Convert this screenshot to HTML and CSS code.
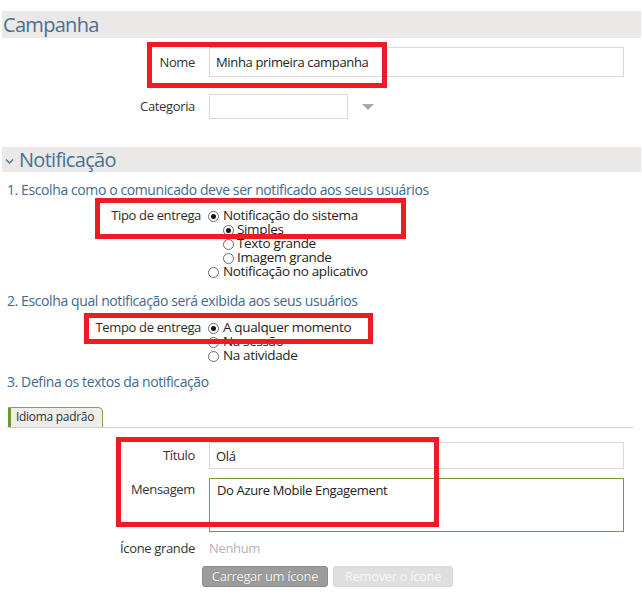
FILE: index.html
```html
<!DOCTYPE html>
<html lang="pt">
<head>
<meta charset="utf-8">
<title>Campanha</title>
<link rel="stylesheet" href="styles.css">
</head>
<body>
<div class="page">
  <div class="bar bar-campanha"><h2 class="bar-title">Campanha</h2></div>

  <div class="field field-nome">
    <label class="flabel" for="nome">Nome</label>
    <input class="text-input nome-input" id="nome" type="text" value="Minha primeira campanha">
  </div>

  <div class="field field-categoria">
    <label class="flabel">Categoria</label>
    <div class="select-box"></div>
    <span class="caret"></span>
  </div>

  <div class="bar bar-notif">
    <svg class="chevron" width="9" height="7" viewBox="0 0 9 7"><polyline points="1,1.5 4.5,5 8,1.5" fill="none" stroke="#4a7092" stroke-width="1.4"/></svg>
    <h2 class="bar-title">Notificação</h2>
  </div>

  <p class="step step1">1. Escolha como o comunicado deve ser notificado aos seus usuários</p>

  <div class="rfield rfield-tipo">
    <span class="rlabel">Tipo de entrega</span>
    <div class="options">
      <div class="opt"><span class="radio checked"></span><span>Notificação do sistema</span></div>
      <div class="opt sub"><span class="radio checked"></span><span>Simples</span></div>
      <div class="opt sub"><span class="radio"></span><span>Texto grande</span></div>
      <div class="opt sub"><span class="radio"></span><span>Imagem grande</span></div>
      <div class="opt"><span class="radio"></span><span>Notificação no aplicativo</span></div>
    </div>
  </div>

  <p class="step step2">2. Escolha qual notificação será exibida aos seus usuários</p>

  <div class="rfield rfield-tempo">
    <span class="rlabel">Tempo de entrega</span>
    <div class="options">
      <div class="opt"><span class="radio checked"></span><span>A qualquer momento</span></div>
      <div class="opt"><span class="radio"></span><span>Na sessão</span></div>
      <div class="opt"><span class="radio"></span><span>Na atividade</span></div>
    </div>
  </div>

  <p class="step step3">3. Defina os textos da notificação</p>

  <div class="tabs">
    <div class="tab">Idioma padrão</div>
  </div>

  <div class="field field-titulo">
    <label class="flabel">Título</label>
    <input class="text-input titulo-input" type="text" value="Olá">
  </div>

  <div class="field field-msg">
    <label class="flabel msg-label">Mensagem</label>
    <textarea class="msg-input">Do Azure Mobile Engagement</textarea>
  </div>

  <div class="field field-icone">
    <span class="flabel">Ícone grande</span>
    <span class="none-text">Nenhum</span>
  </div>

  <div class="buttons">
    <button class="btn btn-upload">Carregar um ícone</button>
    <button class="btn btn-remove">Remover o ícone</button>
  </div>

  <div class="callout callout-1"></div>
  <div class="callout callout-2"></div>
  <div class="callout callout-3"></div>
  <div class="callout callout-4"></div>
</div>
</body>
</html>
```

FILE: styles.css
```css
* { box-sizing: border-box; }
html, body { margin: 0; padding: 0; background: #fff; }
body {
  font-family: "Open Sans", "Noto Sans", sans-serif;
  font-size: 13px;
  letter-spacing: -0.35px;
  color: #2b2b2b;
}
.page {
  position: relative;
  width: 642px;
  height: 607px;
  padding-top: 11px;
  overflow: hidden;
}
.bar {
  margin: 0 1px 0 2px;
  background: #eae9e7;
  display: flex;
  align-items: center;
}
.bar-title {
  margin: 0;
  font-weight: normal;
  font-size: 20px;
  letter-spacing: -0.7px;
  color: #4a7092;
}
.bar-campanha { height: 27px; padding-left: 1px; }
.bar-campanha .bar-title { line-height: 27px; }
.bar-notif { height: 25px; margin-top: 28px; padding-left: 3px; }
.bar-notif .bar-title { line-height: 25px; margin-left: 5px; }
.chevron { display: block; margin-top: 4px; }

.field {
  display: grid;
  grid-template-columns: 195px auto auto;
  column-gap: 14px;
  align-items: center;
  justify-content: start;
}
.flabel {
  text-align: right;
  color: #333;
  line-height: 17px;
}
.text-input {
  font: inherit;
  letter-spacing: inherit;
  color: #222;
  border: 1px solid #dadada;
  background: #fff;
  padding: 0 6px;
  outline: none;
  margin: 0;
}
.field-nome { margin-top: 9px; }
.nome-input { width: 415px; height: 30px; }
.field-categoria { margin-top: 17px; column-gap: 14px; }
.select-box { width: 139px; height: 25px; border: 1px solid #dadada; }
.caret {
  width: 0; height: 0;
  border-left: 6px solid transparent;
  border-right: 6px solid transparent;
  border-top: 6px solid #a9a9a9;
}

.step {
  margin: 0;
  padding-left: 7px;
  font-size: 14px;
  line-height: 18px;
  letter-spacing: -0.4px;
  color: #3f6a8c;
}
.step1 { margin-top: 9px; }
.step2 { margin-top: 14px; }
.step3 { margin-top: 11px; }

.rfield {
  display: grid;
  grid-template-columns: 201px auto;
  column-gap: 7px;
  align-items: start;
}
.rfield-tipo { margin-top: 9px; }
.rfield-tempo { margin-top: 10px; }
.rlabel { text-align: right; line-height: 14px; color: #2b2b2b; }
.options { display: flex; flex-direction: column; }
.opt {
  display: flex;
  align-items: center;
  gap: 4px;
  height: 14px;
  line-height: 14px;
  color: #1e1e1e;
  font-size: 13.5px;
}
.opt.sub { padding-left: 15px; gap: 3px; }
.radio {
  width: 11px; height: 11px;
  border: 1px solid #6a6a6a;
  border-radius: 50%;
  background: #fff;
  flex: none;
  display: flex;
  align-items: center;
  justify-content: center;
  transform: translateY(1px);
}
.radio.checked::after {
  content: "";
  width: 5px; height: 5px;
  border-radius: 50%;
  background: #111;
}

.tabs {
  margin: 16px 9px 0 7px;
  border-bottom: 1px solid #d2d2d2;
  height: 21px;
  display: flex;
  align-items: flex-end;
}
.tab {
  margin-left: 1px;
  width: 95px;
  height: 20px;
  background: #efeeec;
  border-left: 3px solid #6b9a34;
  border-top: 1px solid #7aa646;
  border-right: 1px solid #7aa646;
  border-top-right-radius: 5px;
  font-size: 12px;
  letter-spacing: -0.3px;
  line-height: 18px;
  padding-left: 5px;
  color: #333;
}

.field-titulo { margin-top: 14px; }
.titulo-input { width: 415px; height: 27px; }
.field-msg { margin-top: 9px; align-items: start; }
.msg-label { padding-top: 3px; }
.msg-input {
  font: inherit;
  letter-spacing: inherit;
  color: #222;
  width: 415px;
  height: 54px;
  border: 1px solid #6f9f35;
  padding: 3px 7px;
  line-height: 17px;
  resize: none;
  outline: none;
  margin: 0;
  display: block;
}
.field-icone { margin-top: 8px; }
.none-text { color: #b3b3b3; line-height: 17px; }

.buttons {
  margin: 9px 0 0 202px;
  display: flex;
  gap: 5px;
}
.btn {
  font: inherit;
  letter-spacing: -0.35px;
  height: 21px;
  padding: 0 6px;
  border-radius: 3px;
  line-height: 19px;
  margin: 0;
}
.btn-upload {
  width: 126px;
  background: #9c9c9c;
  border: 1px solid #8b8b8b;
  color: #fafafa;
  text-shadow: 0 0 1px #666;
}
.btn-remove {
  width: 120px;
  background: #dfdfdf;
  border: 1px solid #d8d8d8;
  color: #f7f7f7;
}

.callout {
  position: absolute;
  border: 5px solid #ed1c24;
  pointer-events: none;
}
.callout-1 { left: 147px; top: 42px; width: 240px; height: 46px; }
.callout-2 { left: 95px; top: 198px; width: 311px; height: 41px; }
.callout-3 { left: 84px; top: 313px; width: 289px; height: 31px; }
.callout-4 { left: 116px; top: 437px; width: 323px; height: 90px; }
```
